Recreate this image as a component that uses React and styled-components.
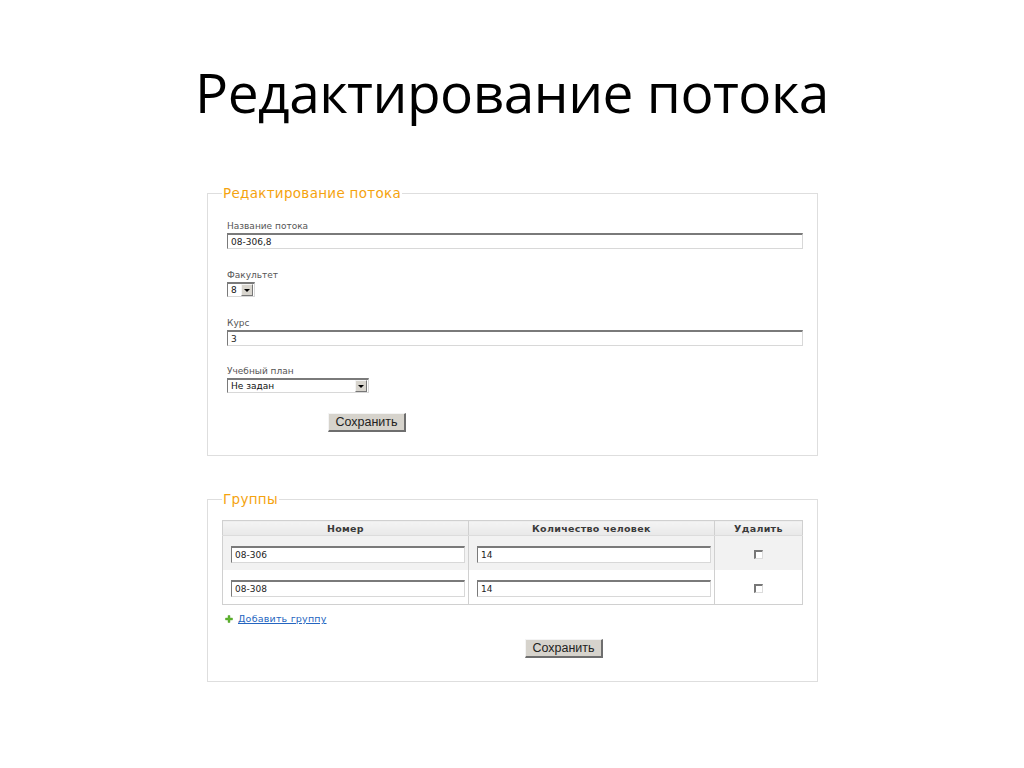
import styled, { createGlobalStyle } from "styled-components";

const GlobalStyle = createGlobalStyle`
  body {
    margin: 0;
    background: #ffffff;
    font-family: "DejaVu Sans", Verdana, sans-serif;
  }
`;

const Slide = styled.div`
  width: 1024px;
  height: 768px;
  display: flex;
  flex-direction: column;
  align-items: center;
`;

const Title = styled.h1`
  margin: 56px 0 0;
  font-family: "Open Sans", "Liberation Sans", sans-serif;
  font-weight: 400;
  font-size: 55px;
  line-height: 72px;
  color: #000;
  letter-spacing: -0.5px;
`;

const Panel = styled.fieldset`
  box-sizing: border-box;
  width: 611px;
  margin: ${(p) => p.$top}px 0 0 1px;
  padding: ${(p) => p.$pad};
  border: 1px solid #dedede;
  min-width: 0;
`;

const Legend = styled.legend`
  margin-left: 0;
  padding: 0 1px;
  color: #f5a30f;
  font-size: 13.5px;
  letter-spacing: 0.3px;
  line-height: 16px;
`;

const Field = styled.div`
  display: flex;
  flex-direction: column;
  align-items: flex-start;
  margin-bottom: ${(p) => p.$gap}px;
`;

const Label = styled.label`
  font-size: 9px;
  color: #555;
  line-height: 11px;
  margin-bottom: 1px;
`;

const TextInput = styled.input`
  box-sizing: border-box;
  width: ${(p) => p.$w}px;
  height: ${(p) => p.$h || 16}px;
  margin: 0;
  padding: 0 3px;
  border-top: 2px solid #7a7a7a;
  border-left: 1px solid #7a7a7a;
  border-right: 1px solid #d8d8d8;
  border-bottom: 1px solid #d8d8d8;
  font-family: "DejaVu Sans", Verdana, sans-serif;
  font-size: 9px;
  color: #222;
  background: #fff;
  outline: none;
`;

const SelectBox = styled.div`
  box-sizing: border-box;
  width: ${(p) => p.$w}px;
  height: 15px;
  display: flex;
  align-items: center;
  justify-content: space-between;
  border-top: 2px solid #7a7a7a;
  border-left: 1px solid #7a7a7a;
  border-right: 1px solid #d8d8d8;
  border-bottom: 1px solid #d8d8d8;
  font-size: 9px;
  color: #111;
  padding-left: 3px;
  background: #fff;
`;

const ArrowButton = styled.span`
  box-sizing: border-box;
  width: 12px;
  height: 12px;
  margin-right: 1px;
  background: #d8d5ce;
  border-top: 1px solid #f4f4f4;
  border-left: 1px solid #f4f4f4;
  border-right: 1px solid #777;
  border-bottom: 1px solid #777;
  display: flex;
  align-items: center;
  justify-content: center;

  &::after {
    content: "";
    border-left: 3px solid transparent;
    border-right: 3px solid transparent;
    border-top: 3px solid #000;
  }
`;

const Button = styled.button`
  box-sizing: border-box;
  width: 78px;
  height: 19px;
  padding: 0;
  margin: ${(p) => p.$mt || 0}px 0 0 ${(p) => p.$offset}px;
  background: #d6d3cc;
  border-top: 1px solid #f4f4f4;
  border-left: 1px solid #f4f4f4;
  border-right: 2px solid #6e6e6e;
  border-bottom: 2px solid #6e6e6e;
  font-family: "Liberation Sans", Arial, sans-serif;
  font-size: 12.5px;
  color: #222;
  display: block;
`;

const FormBody = styled.div`
  padding-left: 5px;
`;

const Table = styled.table`
  width: 581px;
  border-collapse: collapse;
  border: 1px solid #d0d0d0;
`;

const HeadCell = styled.th`
  height: 14px;
  padding: 0;
  font-size: 9.5px;
  font-weight: 600;
  color: #3a3a3a;
  letter-spacing: 0.3px;
  background: linear-gradient(#f4f4f4, #e8e8e8);
  border: 1px solid #d0d0d0;
  border-bottom: 1px solid #dcdcdc;
  width: ${(p) => p.$w}px;
`;

const Row = styled.tr`
  background: ${(p) => (p.$shade ? "#f2f2f2" : "#ffffff")};
`;

const Cell = styled.td`
  height: 34px;
  padding: 0 2px 0 8px;
  border-right: 1px solid #d0d0d0;
  text-align: ${(p) => (p.$center ? "center" : "left")};
  vertical-align: middle;
`;

const Check = styled.input`
  appearance: none;
  box-sizing: border-box;
  width: 9px;
  height: 9px;
  margin: 0 5px 0 0;
  background: #fff;
  border-top: 2px solid #777;
  border-left: 2px solid #777;
  border-right: 1px solid #dcdcdc;
  border-bottom: 1px solid #dcdcdc;
  display: inline-block;
  vertical-align: middle;
`;

const AddRow = styled.div`
  display: flex;
  align-items: center;
  gap: 5px;
  margin: 8px 0 0 3px;
`;

const AddLink = styled.a`
  font-size: 9.5px;
  color: #2465c0;
  text-decoration: underline;
  letter-spacing: 0.2px;
`;

const Plus = () => (
  <svg width="8" height="8" viewBox="0 0 8 8">
    <path
      d="M3 0.5h2v2.5h2.5v2H5v2.5H3V5H0.5V3H3z"
      fill="#5fb52e"
      stroke="#4a9a20"
      strokeWidth="0.4"
    />
  </svg>
);

const groups = [
  { name: "08-306", count: "14" },
  { name: "08-308", count: "14" },
];

export default function App() {
  return (
    <>
      <GlobalStyle />
      <Slide>
        <Title>Редактирование потока</Title>

        <Panel $top={57} $pad="20px 14px 23px 14px">
          <Legend>Редактирование потока</Legend>
          <FormBody>
            <Field $gap={21}>
              <Label>Название потока</Label>
              <TextInput $w={576} defaultValue="08-306,8" />
            </Field>
            <Field $gap={21}>
              <Label>Факультет</Label>
              <SelectBox $w={28}>
                8<ArrowButton />
              </SelectBox>
            </Field>
            <Field $gap={20}>
              <Label>Курс</Label>
              <TextInput $w={576} defaultValue="3" />
            </Field>
            <Field $gap={20}>
              <Label>Учебный план</Label>
              <SelectBox $w={142}>
                Не задан
                <ArrowButton />
              </SelectBox>
            </Field>
            <Button $offset={101}>Сохранить</Button>
          </FormBody>
        </Panel>

        <Panel $top={35} $pad="13px 14px 23px 14px">
          <Legend>Группы</Legend>
          <Table>
            <thead>
              <tr>
                <HeadCell $w={245}>Номер</HeadCell>
                <HeadCell $w={245}>Количество человек</HeadCell>
                <HeadCell $w={91}>Удалить</HeadCell>
              </tr>
            </thead>
            <tbody>
              {groups.map((g, i) => (
                <Row key={g.name} $shade={i % 2 === 0}>
                  <Cell>
                    <TextInput $w={234} $h={17} defaultValue={g.name} />
                  </Cell>
                  <Cell>
                    <TextInput $w={234} $h={17} defaultValue={g.count} />
                  </Cell>
                  <Cell $center>
                    <Check type="checkbox" />
                  </Cell>
                </Row>
              ))}
            </tbody>
          </Table>
          <AddRow>
            <Plus />
            <AddLink href="#">Добавить группу</AddLink>
          </AddRow>
          <Button $offset={303} $mt={15}>
            Сохранить
          </Button>
        </Panel>
      </Slide>
    </>
  );
}
